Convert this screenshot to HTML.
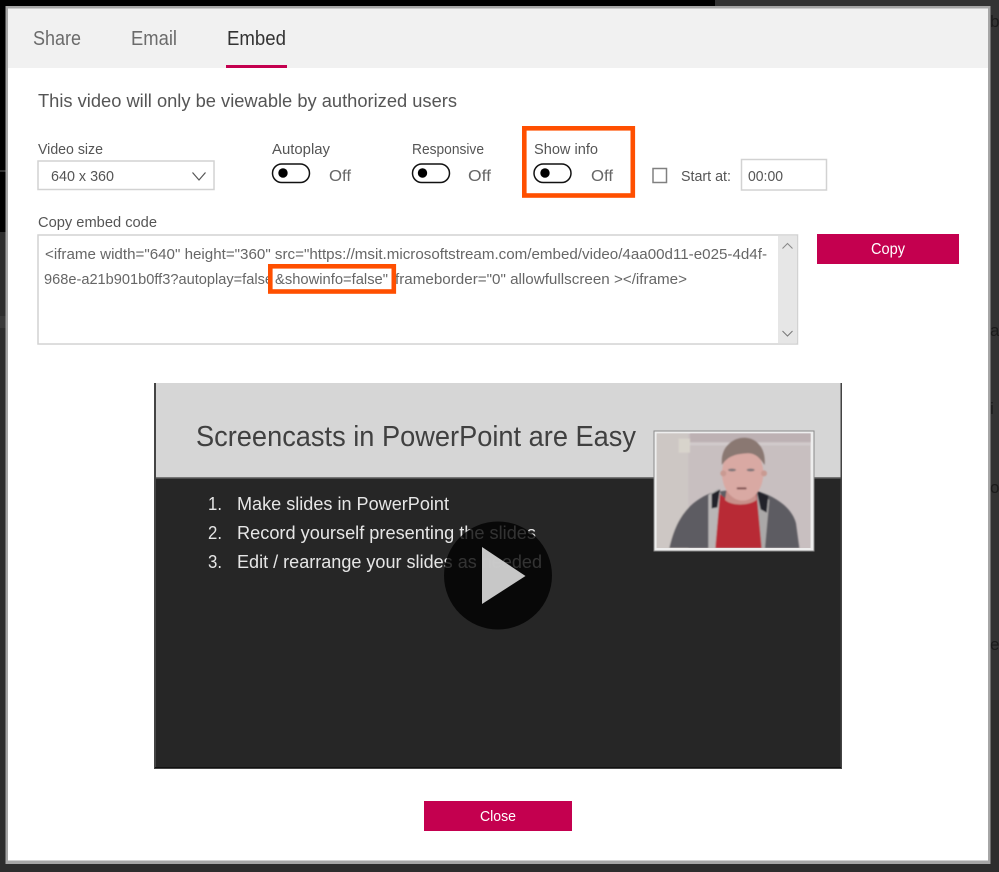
<!DOCTYPE html>
<html lang="en"><head><meta charset="utf-8"><title>Embed</title>
<style>html,body{margin:0;padding:0;background:#2d2d2d;overflow:hidden}svg{display:block}text{font-family:"Liberation Sans",sans-serif}</style></head>
<body>
<svg xmlns="http://www.w3.org/2000/svg" width="999" height="872" viewBox="0 0 999 872">
<defs>
<filter id="b" x="-10%" y="-10%" width="120%" height="120%"><feGaussianBlur stdDeviation="2.500"/></filter>
<clipPath id="ph"><rect x="50" y="40" width="462" height="344"/></clipPath>
</defs>
<rect width="999" height="872" fill="#2d2d2d"/>
<rect width="715" height="7" fill="#000"/>
<rect x="715" width="284" height="7" fill="#333"/>
<rect width="6" height="232" fill="#000"/>
<rect y="170" width="6" height="2" fill="#333"/>
<rect y="316" width="6" height="12" fill="#383838"/>
<rect x="990" width="9" height="700" fill="#333"/>
<g fill="#1a1a1a" font-size="17">
<text x="990" y="27">b</text><text x="990" y="336">a</text><text x="990" y="414">i</text><text x="990" y="493">o</text><text x="990" y="650">e</text>
</g>
<rect x="5.500" y="6" width="985" height="858" fill="#a6a6a6"/>
<rect x="8" y="8.500" width="980" height="852" fill="#fff"/>
<rect x="8" y="8.500" width="980" height="59.500" fill="#f1f1f1"/>

<text x="33" y="45" font-size="20" fill="#6b6b6b" textLength="48" lengthAdjust="spacingAndGlyphs">Share</text>
<text x="131" y="45" font-size="20" fill="#6b6b6b" textLength="46" lengthAdjust="spacingAndGlyphs">Email</text>
<text x="227" y="45" font-size="20" fill="#333" textLength="59" lengthAdjust="spacingAndGlyphs">Embed</text>
<rect x="226" y="65" width="61" height="3" fill="#c4004f"/>

<text x="38" y="107" font-size="18" fill="#555" textLength="419" lengthAdjust="spacingAndGlyphs">This video will only be viewable by authorized users</text>

<text x="38" y="154" font-size="15" fill="#555" textLength="65" lengthAdjust="spacingAndGlyphs">Video size</text>
<rect x="38" y="161" width="176" height="28.500" fill="#fff" stroke="#d2d2d2" stroke-width="1.500"/>
<text x="51" y="181" font-size="15" fill="#555" textLength="63" lengthAdjust="spacingAndGlyphs">640 x 360</text>
<path d="M192.500 172.500L199 180L205.500 172.500" fill="none" stroke="#555" stroke-width="1.200"/>

<text x="272" y="154" font-size="15" fill="#555" textLength="58" lengthAdjust="spacingAndGlyphs">Autoplay</text>
<rect x="272.500" y="164" width="37" height="18.500" rx="9.250" fill="#fff" stroke="#111" stroke-width="1.500"/>
<circle cx="283" cy="173" r="4.700" fill="#000"/>
<text x="329" y="181" font-size="16" fill="#666" textLength="22" lengthAdjust="spacingAndGlyphs">Off</text>

<text x="412" y="154" font-size="15" fill="#555" textLength="72" lengthAdjust="spacingAndGlyphs">Responsive</text>
<rect x="412.500" y="164" width="37" height="18.500" rx="9.250" fill="#fff" stroke="#111" stroke-width="1.500"/>
<circle cx="422.500" cy="173" r="4.700" fill="#000"/>
<text x="468" y="181" font-size="16" fill="#666" textLength="23" lengthAdjust="spacingAndGlyphs">Off</text>

<text x="534" y="154" font-size="15" fill="#555" textLength="64" lengthAdjust="spacingAndGlyphs">Show info</text>
<rect x="534" y="164" width="37" height="18.500" rx="9.250" fill="#fff" stroke="#111" stroke-width="1.500"/>
<circle cx="545" cy="173" r="4.700" fill="#000"/>
<text x="591" y="181" font-size="16" fill="#666" textLength="22" lengthAdjust="spacingAndGlyphs">Off</text>
<rect x="524.300" y="128.300" width="108.500" height="67.200" fill="none" stroke="#ff4f00" stroke-width="4.600"/>

<rect x="653" y="168.500" width="13.500" height="14" fill="#fff" stroke="#808080" stroke-width="1.500"/>
<text x="681" y="181" font-size="15" fill="#555" textLength="50" lengthAdjust="spacingAndGlyphs">Start at:</text>
<rect x="741.500" y="159.500" width="85" height="30.500" fill="#fff" stroke="#d2d2d2" stroke-width="1.500"/>
<text x="748" y="181" font-size="15" fill="#555" textLength="35" lengthAdjust="spacingAndGlyphs">00:00</text>

<text x="38" y="227" font-size="15" fill="#555" textLength="119" lengthAdjust="spacingAndGlyphs">Copy embed code</text>
<rect x="38" y="235" width="759.500" height="109" fill="#fff" stroke="#d2d2d2" stroke-width="1.500"/>
<rect x="778" y="236" width="19" height="107" fill="#e6e6e6"/>
<path d="M782.500 248.500L787.500 243.500L792.500 248.500" fill="none" stroke="#888" stroke-width="1"/>
<path d="M782.500 331L787.500 336L792.500 331" fill="none" stroke="#777" stroke-width="1"/>
<text x="45" y="259" font-size="15" fill="#666" textLength="722" lengthAdjust="spacingAndGlyphs">&lt;iframe width="640" height="360" src="https://msit.microsoftstream.com/embed/video/4aa00d11-e025-4d4f-</text>
<text x="44" y="284" font-size="15" fill="#666" textLength="229" lengthAdjust="spacingAndGlyphs">968e-a21b901b0ff3?autoplay=false</text>
<text x="275" y="284" font-size="15" fill="#666" textLength="113" lengthAdjust="spacingAndGlyphs">&amp;showinfo=false"</text>
<text x="395" y="284" font-size="15" fill="#666" textLength="292" lengthAdjust="spacingAndGlyphs">frameborder="0" allowfullscreen &gt;&lt;/iframe&gt;</text>
<rect x="270.300" y="266.300" width="123.500" height="25.200" fill="none" stroke="#ff4f00" stroke-width="4.600"/>

<rect x="817" y="234" width="142" height="30" fill="#c4004f"/>
<text x="871" y="254" font-size="16" fill="#fff" textLength="34" lengthAdjust="spacingAndGlyphs">Copy</text>

<!-- video -->
<rect x="154" y="383" width="688" height="386" fill="#444"/>
<rect x="156" y="383" width="684.500" height="94" fill="#d6d6d6"/>
<rect x="156" y="477" width="684.500" height="1.500" fill="#777"/>
<rect x="156" y="478.500" width="684.500" height="289" fill="#262626"/>
<rect x="155" y="767" width="686" height="1" fill="#111"/>
<text x="196" y="446" font-size="29" fill="#404040" textLength="440" lengthAdjust="spacingAndGlyphs">Screencasts in PowerPoint are Easy</text>
<g font-size="18.500" fill="#e6e6e6">
<text x="208" y="510" textLength="14" lengthAdjust="spacingAndGlyphs">1.</text>
<text x="237" y="510" textLength="212" lengthAdjust="spacingAndGlyphs">Make slides in PowerPoint</text>
<text x="208" y="539" textLength="14" lengthAdjust="spacingAndGlyphs">2.</text>
<text x="237" y="539" textLength="299" lengthAdjust="spacingAndGlyphs">Record yourself presenting the slides</text>
<text x="208" y="568" textLength="14" lengthAdjust="spacingAndGlyphs">3.</text>
<text x="237" y="568" textLength="305" lengthAdjust="spacingAndGlyphs">Edit / rearrange your slides as needed</text>
</g>

<!-- photo -->
<rect x="653.500" y="430.500" width="161" height="121" fill="#8a8a8a"/>
<rect x="654.500" y="431.500" width="159" height="119" fill="#eeeeee"/>
<g transform="translate(640 420) scale(.33333)">
<g clip-path="url(#ph)">
<rect x="50" y="40" width="462" height="344" fill="#c8bfc0"/>
<g filter="url(#b)">
<rect x="40" y="30" width="105" height="360" fill="#cdc7c4"/>
<rect x="150" y="30" width="370" height="36" fill="#bdb1b3"/>
<rect x="150" y="68" width="370" height="8" fill="#d2cbcc"/>
<rect x="116" y="56" width="34" height="42" fill="#d8d4cc"/>
<path d="M88 384C105 310 135 250 215 218L270 210L345 212C400 225 455 260 468 310L478 384Z" fill="#5d5c62"/>
<path d="M205 225L235 205L250 240L228 384H205Z" fill="#b9b6b6"/>
<path d="M350 215L388 240L375 384H350Z" fill="#aaa8a8"/>
<path d="M215 222L240 208L232 262L215 265Z" fill="#20222c"/>
<path d="M350 212L385 228L380 278L362 268Z" fill="#20222c"/>
<path d="M240 222C265 250 325 250 350 222L365 384H226Z" fill="#b82c36"/>
<path d="M262 195C275 240 330 240 345 195L350 240C325 258 275 258 255 240Z" fill="#c7908a"/>
<ellipse cx="308" cy="160" rx="62" ry="82" fill="#d9a9a3"/>
<circle cx="250" cy="160" r="9" fill="#c99a92"/><circle cx="372" cy="160" r="9" fill="#c99a92"/>
<path d="M246 135C240 85 275 52 315 53C355 55 378 90 374 135C358 112 345 98 320 100C290 102 265 106 246 135Z" fill="#8a7872"/>
<ellipse cx="276" cy="150" rx="12" ry="4" fill="#7f7478"/>
<ellipse cx="332" cy="150" rx="12" ry="4" fill="#7f7478"/>
<rect x="290" y="202" width="30" height="6" rx="3" fill="#7e4f4f"/>
</g>
</g>
</g>

<!-- play -->
<circle cx="498" cy="575.500" r="54" fill="#000" fill-opacity=".78"/>
<path d="M482 547L525.500 576L482 604Z" fill="#cfcfcf" fill-opacity=".96"/>

<rect x="424" y="801" width="148" height="30" fill="#c4004f"/>
<text x="480" y="821" font-size="15" fill="#fff" textLength="36" lengthAdjust="spacingAndGlyphs">Close</text>
</svg>
</body></html>
